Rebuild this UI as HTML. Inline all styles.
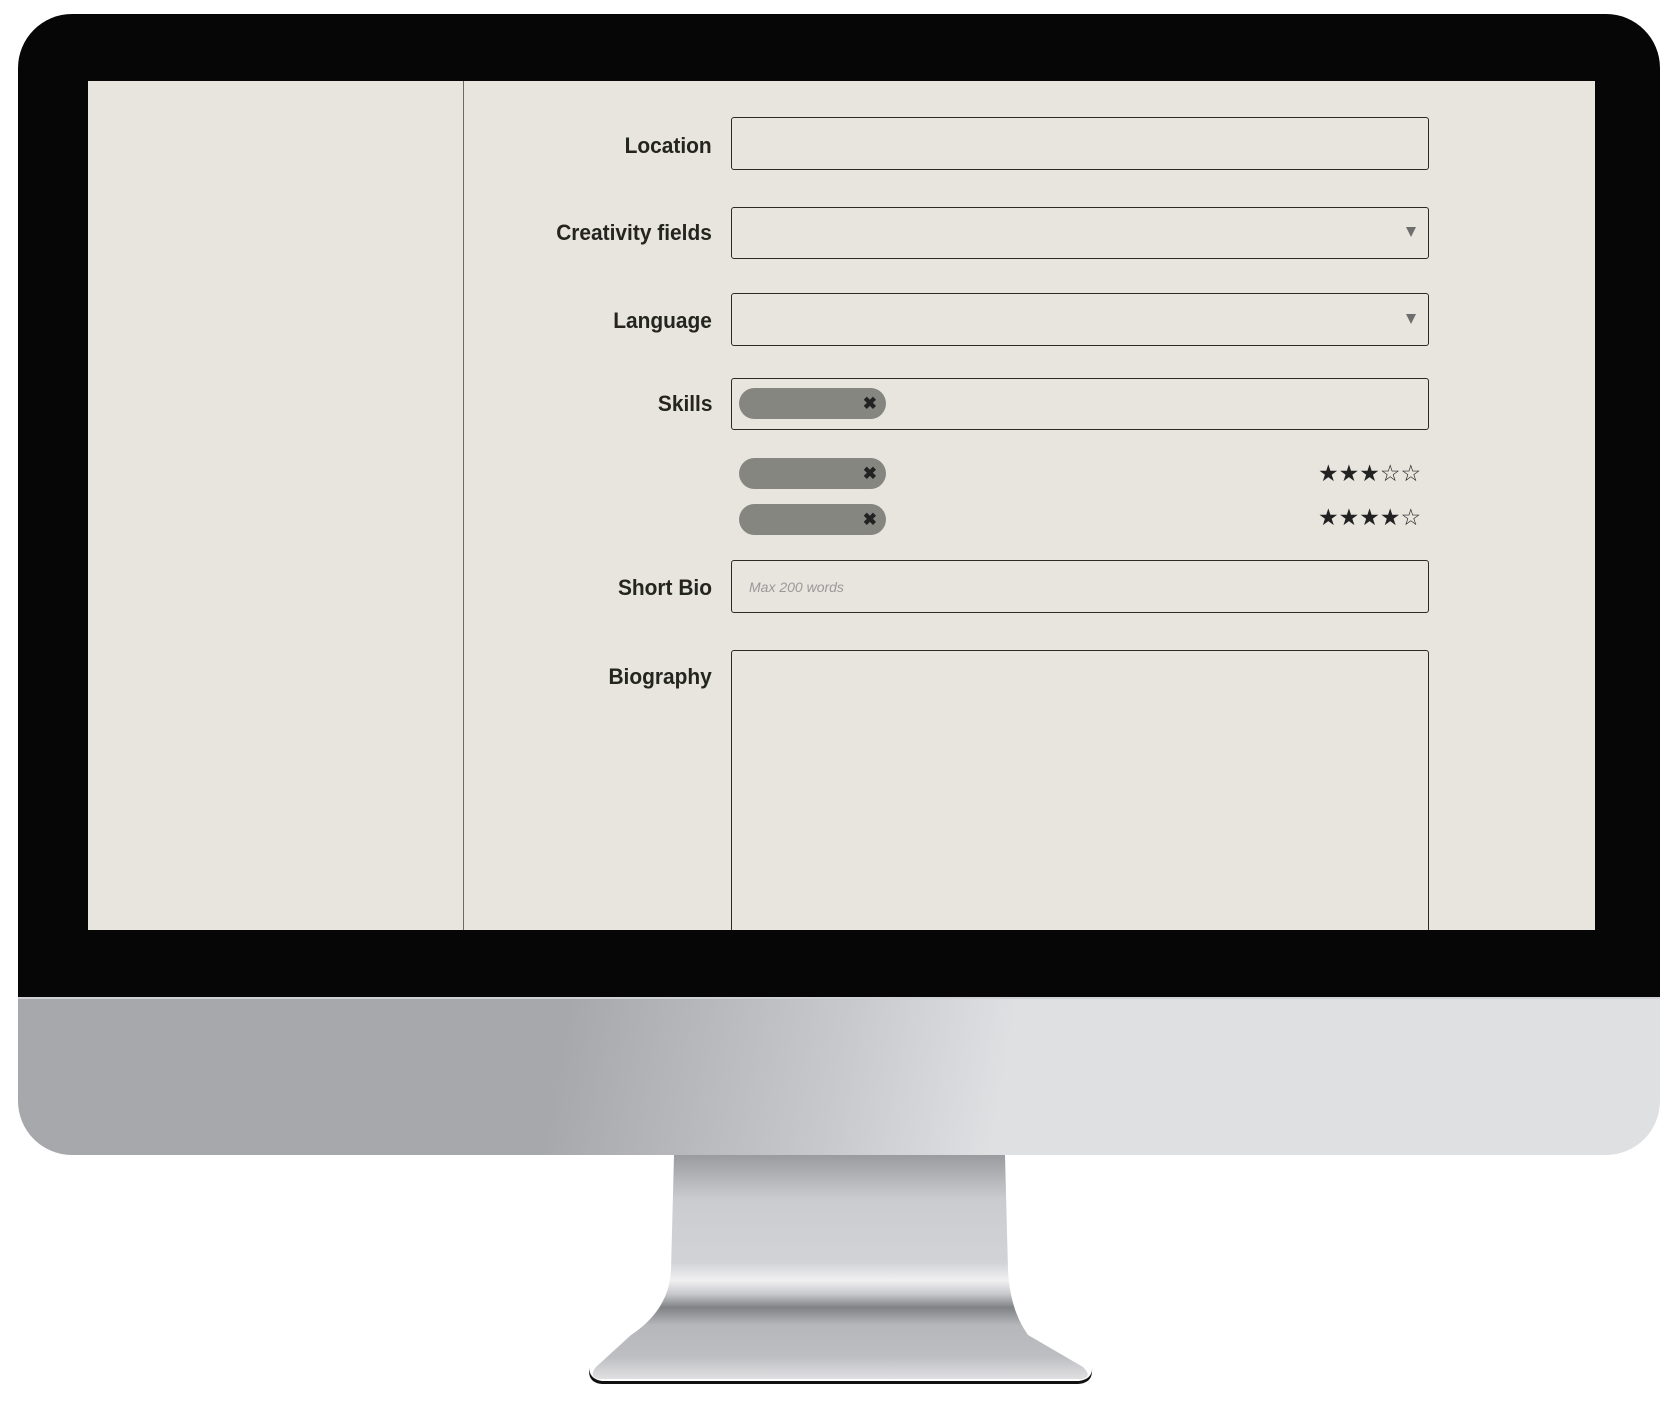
<!DOCTYPE html>
<html><head><meta charset="utf-8"><style>
*{margin:0;padding:0;box-sizing:border-box}
body{width:1677px;height:1401px;background:#fff;position:relative;overflow:hidden;font-family:"Liberation Sans",sans-serif}
.bezel{position:absolute;left:18px;top:14px;width:1642px;height:984px;background:#060606;border-radius:54px 54px 0 0}
.chin{position:absolute;left:18px;top:997px;width:1642px;height:158px;border-radius:0 0 54px 54px;
background:linear-gradient(100deg,#a7a8ac 0%,#a7a8ac 33%,#c8c9cd 50%,#dfe0e2 60%,#dfe0e2 100%);border-top:2px solid #cfd0d3}
.stand{position:absolute;left:588px;top:1155px;width:505px;height:230px}
.screen{position:absolute;left:88px;top:81px;width:1507px;height:849px;background:#e8e5df;overflow:hidden}
.div{position:absolute;left:375px;top:0;width:1px;height:849px;background:#6a6c66}
.lbl{position:absolute;right:883px;font-weight:bold;font-size:22px;color:#24251f;transform:scaleX(.95);transform-origin:right center;line-height:26px}
.box{position:absolute;left:643px;width:698px;border:1.6px solid #2a2b27;border-radius:3px}
.arr{position:absolute;right:12px;top:50%;margin-top:-6px;width:0;height:0;border-left:5px solid transparent;border-right:5px solid transparent;border-top:10px solid #6e6e6e}
.chip{position:absolute;left:651px;width:147px;height:31px;border-radius:16px;background:#858680}
.chip span{position:absolute;right:9px;top:6px;font-size:17px;font-weight:bold;color:#222}
.stars{position:absolute;left:1230px;font-size:23px;color:#222;letter-spacing:0px}
</style></head><body>
<div class="bezel"></div>
<div class="screen">
<div class="div"></div>
<div class="lbl" style="top:52px">Location</div>
<div class="box" style="top:36px;height:53px"></div>
<div class="lbl" style="top:139px">Creativity fields</div>
<div class="box" style="top:126px;height:52px"><div class="arr"></div></div>
<div class="lbl" style="top:227px">Language</div>
<div class="box" style="top:212px;height:53px"><div class="arr"></div></div>
<div class="lbl" style="top:310px">Skills</div>
<div class="box" style="top:297px;height:52px"></div>
<div class="chip" style="top:307px"><span>✖</span></div>
<div class="chip" style="top:377px"><span>✖</span></div>
<div class="stars" style="top:379px">★★★☆☆</div>
<div class="chip" style="top:423px"><span>✖</span></div>
<div class="stars" style="top:423px">★★★★☆</div>
<div class="lbl" style="top:494px">Short Bio</div>
<div class="box" style="top:479px;height:53px"><div style="position:absolute;left:17px;top:18px;font-size:14px;font-style:italic;color:#999">Max 200 words</div></div>
<div class="lbl" style="top:583px">Biography</div>
<div class="box" style="top:569px;height:300px"></div>
</div>
<div class="chin"></div>
<svg class="stand" viewBox="0 0 505 230">
<defs>
<linearGradient id="g" x1="0" y1="0" x2="0" y2="1">
<stop offset="0" stop-color="#9a9b9f"/><stop offset=".12" stop-color="#b8b9bd"/><stop offset=".2" stop-color="#cbccd0"/>
<stop offset=".48" stop-color="#d2d3d6"/><stop offset=".56" stop-color="#f0f0f1"/><stop offset=".62" stop-color="#c8c9cc"/>
<stop offset=".68" stop-color="#808285"/><stop offset=".76" stop-color="#b6b7bb"/><stop offset=".9" stop-color="#bdbec2"/><stop offset="1" stop-color="#e0e0e2"/>
</linearGradient>
</defs>
<path d="M1 212 Q1 224 14 226 L491 226 Q505 224 504 212 L504 216 Q504 228 490 229 L14 229 Q1 228 1 216Z" fill="#111"/>
<path d="M86 0 L417 0 L420 115 Q422 155 440 180 L495 212 Q505 222 494 224 L11 224 Q0 222 8 212 L43 180 Q81 155 83 115Z" fill="url(#g)"/>
</svg>
</body></html>
